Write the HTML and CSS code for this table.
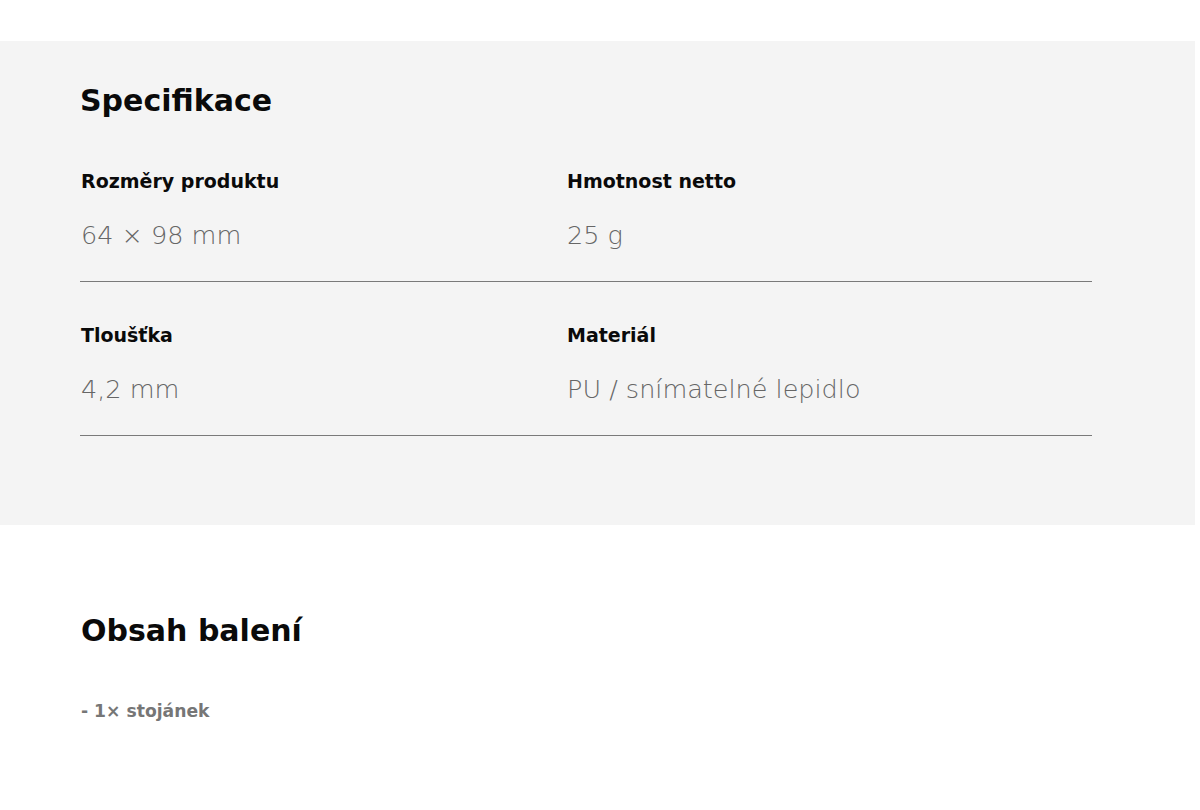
FILE: index.html
```html
<!DOCTYPE html>
<html lang="cs">
<head>
    <meta charset="UTF-8">
    <meta name="viewport" content="width=device-width, initial-scale=1.0">
    <title>Specifikace</title>
    <link rel="stylesheet" href="styles.css">
</head>
<body>

<section class="specs">
    <h2 class="section-title">Specifikace</h2>

    <div class="spec-row">
        <div class="spec-item">
            <p class="spec-label">Rozměry produktu</p>
            <p class="spec-value">64 × 98 mm</p>
        </div>
        <div class="spec-item">
            <p class="spec-label">Hmotnost netto</p>
            <p class="spec-value">25 g</p>
        </div>
    </div>

    <div class="spec-row">
        <div class="spec-item">
            <p class="spec-label">Tloušťka</p>
            <p class="spec-value">4,2 mm</p>
        </div>
        <div class="spec-item">
            <p class="spec-label">Materiál</p>
            <p class="spec-value">PU / snímatelné lepidlo</p>
        </div>
    </div>
</section>

<section class="package">
    <h2 class="section-title">Obsah balení</h2>
    <p class="package-item">- 1× stojánek</p>
</section>

</body>
</html>
```

FILE: styles.css
```css
body {
    margin: 0;
    padding-top: 41px;
    font-family: "DejaVu Sans", "Open Sans", sans-serif;
    color: #0a0a0a;
    background: #fff;
}

p {
    margin: 0;
}

.section-title {
    margin: 0;
    font-size: 30px;
    line-height: 36px;
    font-weight: 700;
}

/* Specifikace */
.specs {
    margin-right: 5px;
    padding: 42px 103px 89px 80px;
    background-color: #f4f4f4;
}

.specs .section-title {
    margin-bottom: 9px;
}

.spec-row {
    display: grid;
    grid-template-columns: 486px 1fr;
    padding: 41px 0 30px 1px;
    border-bottom: 1px solid #7a7a7a;
}

.spec-label {
    font-size: 19px;
    line-height: 24px;
    font-weight: 700;
}

.spec-value {
    margin-top: 26px;
    font-size: 25.5px;
    line-height: 32px;
    font-weight: 300;
    color: #666;
}

/* Obsah baleni */
.package {
    padding: 88px 80px 80px 81px;
}

.package-item {
    margin-top: 50px;
    font-size: 17.2px;
    line-height: 24px;
    font-weight: 700;
    color: #767676;
}
```
